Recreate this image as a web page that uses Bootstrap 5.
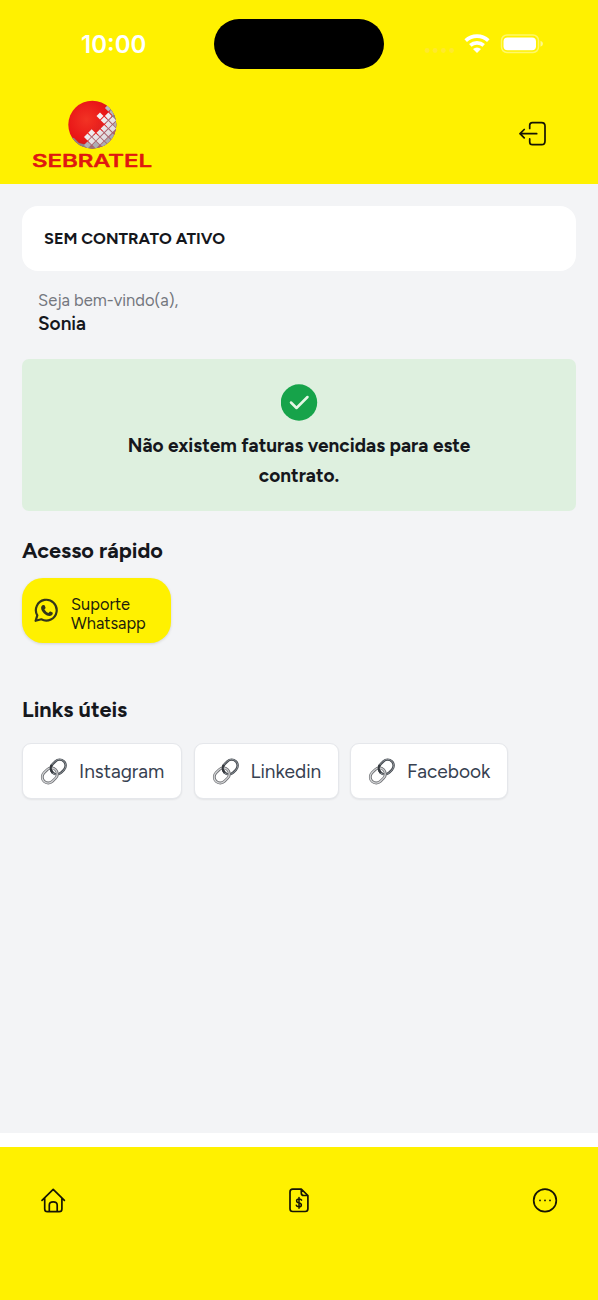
<!DOCTYPE html>
<html lang="pt-BR">
<head>
<meta charset="utf-8">
<meta name="viewport" content="width=device-width, initial-scale=1">
<title>Sebratel</title>
<link href="https://cdn.jsdelivr.net/npm/bootstrap@5.3.0/dist/css/bootstrap.min.css" rel="stylesheet">
<style>
:root { --brand: #fff100; }
body { font-family: Figtree, Lato, "Open Sans", sans-serif; background: #f3f4f6; color: #15171c; height: 1300px; overflow: hidden; }
svg { display: block; flex: none; }
.top-area { background: var(--brand); height: 184px; }
.status-bar { height: 88px; display: grid; grid-template-columns: 214px 170px 214px; }
.clock { font: 600 24px/30px Inter, sans-serif; letter-spacing: 0; padding: 30px 0 0 81px; color: #fff; }
.island { margin-top: 19px; height: 50px; border-radius: 25px; background: #000; width: 170px; }
.signals { padding: 34px 0 0 39px; }
.brand-row { padding: 12px 51px 0 32px; }
.logout { margin-top: 21px; }
.content { padding: 22px 22px 0; height: 949px; }
.contract { height: 65px; border-radius: 16px; padding: 1px 22px 0; font-size: 16.3px; font-weight: 700; }
.welcome { padding: 17px 16px 0; height: 88px; }
.hello { font-size: 16.5px; line-height: 24px; color: #74777e; }
.person { font-size: 19px; line-height: 24px; font-weight: 600; }
.notice { background: #def0df; height: 152px; border-radius: 7px; padding: 25px 90px 0; }
.notice p { font-size: 19px; line-height: 30px; font-weight: 700; margin: 10px 0 0; }
.section-title { font-size: 21.7px; line-height: 30px; font-weight: 700; margin: 0; height: 30px; }
.quick-title { margin-top: 24px; }
.links-title { margin-top: 51px; }
.support { background: var(--brand); width: 149px; height: 65px; border-radius: 21px; padding: 0 12px; margin-top: 13px; font-size: 16.4px; line-height: 19px; color: #1d1d0c; box-shadow: 0 1px 3px #0002; }
.support-label { padding-top: 7px; }
.link-row { margin-top: 19px; gap: 11.500px; }
.link-chip { height: 56px; border: 1px solid #e5e7eb; border-radius: 9px; background: #fff; padding-left: 17px; gap: 11px; font-size: 19.1px; color: #374151; box-shadow: 0 1px 2px #0001; text-decoration: none; }
.link-chip span { padding-top: 2px; }
.w-ig { width: 160px; } .w-li { width: 145px; } .w-fb { width: 158px; }
.bottom-bar { height: 167px; background: var(--brand); border-top: 14px solid #fff; padding: 40px 40px 0; }
</style>
</head>
<body>
<svg width="0" height="0" class="position-absolute">
  <defs>
    <symbol id="chain" viewBox="-.5 -.8 29 29">
      <g fill="none" transform="rotate(-45 14 14)">
        <rect x="12" y="7.800" width="16.500" height="12.400" rx="6.200" stroke="#43484e" stroke-width="2.500"/>
        <rect x="11.800" y="7.500" width="16.900" height="12.800" rx="6.400" stroke="#a9afb5" stroke-width=".7"/>
        <rect x="-.6" y="7.800" width="17" height="12.400" rx="6.200" stroke="#6d6f73" stroke-width="2.900"/>
        <rect x="-.7" y="7.700" width="17" height="12.400" rx="6.200" stroke="#d3d4d6" stroke-width="1.300"/>
        <path d="M12 14c0-3 2-5.900 5-6.200" stroke="#34383d" stroke-width="2.500"/>
      </g>
    </symbol>
  </defs>
</svg>

<header class="top-area">
  <div class="status-bar">
    <div class="clock">10:00</div>
    <div class="island"></div>
    <div class="signals">
      <svg width="120" height="22" viewBox="0 0 120 22">
        <g fill="#ffe838" opacity=".8"><circle cx="4" cy="16.500" r="2.400"/><circle cx="12" cy="16.500" r="2.400"/><circle cx="20.300" cy="16.500" r="2.400"/><circle cx="28.500" cy="16.500" r="2.400"/></g>
        <g fill="none" stroke="#fff" stroke-width="3.700"><path d="M42.700 6.600a16.500 16.500 0 0 1 22.600 0"/><path d="M47.300 11.400a10 10 0 0 1 13.400 0"/></g>
        <path d="M54 19l-4-4a5.900 5.900 0 0 1 8 0z" fill="#fff"/>
        <rect x="78.500" y="1" width="37" height="17.500" rx="5.500" fill="none" stroke="#fff86a" stroke-width="1.500"/>
        <rect x="80.500" y="3.500" width="32.500" height="12.700" rx="4" fill="#fff"/>
        <path d="M117.500 6.800q2.500 1 2.500 3t-2.500 3z" fill="#fff98a"/>
      </svg>
    </div>
  </div>
  <div class="brand-row d-flex justify-content-between align-items-start">
    <svg width="122" height="70" viewBox="0 0 122 70" role="img" aria-label="Sebratel">
      <defs>
        <radialGradient id="ball" cx=".38" cy=".4" r=".65"><stop offset="0" stop-color="#f23324"/><stop offset=".65" stop-color="#e91517"/><stop offset="1" stop-color="#c81015"/></radialGradient>
        <linearGradient id="shade" x1="0" y1="0" x2="1" y2="1"><stop offset=".5" stop-color="#6b6f78" stop-opacity="0"/><stop offset="1" stop-color="#6b6f78" stop-opacity=".7"/></linearGradient>
        <clipPath id="ballClip"><circle cx="60.300" cy="24.700" r="24"/></clipPath>
        <path id="tile" d="M0-3.500L3.500 0 0 3.500-3.500 0z"/>
      </defs>
      <circle cx="60.300" cy="24.700" r="24" fill="url(#ball)"/>
      <g clip-path="url(#ballClip)">
        <path d="M36 37l6 1 5 5 8 2 14-2 8-8 4-12-1-9-5-8 12-4v48H36z" fill="#898790"/>
        <path d="M55.500 37l4-4 4.500 4.500 8-8 4-4-4-4 6-6 8 9-4 14-13 9H58z" fill="#b5606a"/>
        <g fill="#f5f0f2">
          <use href="#tile" x="68" y="16"/><use href="#tile" x="76.400" y="16"/><use href="#tile" x="72.200" y="20.200"/><use href="#tile" x="80.600" y="20.200"/>
          <use href="#tile" x="76.400" y="24.400"/><use href="#tile" x="72.200" y="28.600"/><use href="#tile" x="80.600" y="28.600"/>
          <use href="#tile" x="59.700" y="32.700"/><use href="#tile" x="68" y="32.700"/><use href="#tile" x="76.400" y="32.700"/>
          <use href="#tile" x="55.500" y="36.900"/><use href="#tile" x="63.900" y="36.900"/><use href="#tile" x="72.200" y="36.900"/>
          <use href="#tile" x="59.700" y="41"/><use href="#tile" x="68" y="41"/>
        </g>
        <g fill="#b8b7bd"><use href="#tile" x="76.400" y="8"/><use href="#tile" x="80.600" y="12"/><use href="#tile" x="84.600" y="24.400"/><use href="#tile" x="80.600" y="37"/><use href="#tile" x="76.400" y="41"/><use href="#tile" x="63.900" y="45"/><use href="#tile" x="55.500" y="45"/><use href="#tile" x="72.200" y="45"/></g>
        <rect x="36" y="0" width="49" height="49" fill="url(#shade)" opacity=".4"/>
      </g>
      <text x="0" y="67.300" textLength="120" lengthAdjust="spacingAndGlyphs" font-family="Inter, sans-serif" font-weight="500" font-size="17.500" fill="#df1710" stroke="#df1710" stroke-width=".6" stroke-linejoin="round">SEBRATEL</text>
    </svg>
    <svg class="logout" width="28" height="26" viewBox="0 0 28 26" fill="none" stroke="#171505" stroke-width="1.700" stroke-linecap="round" stroke-linejoin="round"><path d="M10.700 7.500V4.300Q10.700 1.600 13.400 1.600H22.600Q26 1.600 26 5V20Q26 23.700 22.600 23.700H13.400Q10.700 23.700 10.700 21V17.900M17.700 12.700H1M5.200 8.500L1 12.700 5.200 16.900"/></svg>
  </div>
</header>

<main class="content">
  <div class="contract bg-white d-flex align-items-center"><span>SEM CONTRATO ATIVO</span></div>
  <div class="welcome"><div class="hello">Seja bem-vindo(a),</div><div class="person">Sonia</div></div>
  <section class="notice text-center">
    <svg class="mx-auto" width="37" height="37" viewBox="0 0 37 37"><circle cx="18" cy="18.500" r="18.200" fill="#16a34a"/><path d="M10 18.500l5.500 5.500L26.500 13" fill="none" stroke="#e4f7e5" stroke-width="2.500" stroke-linecap="round" stroke-linejoin="round"/></svg>
    <p>Não existem faturas vencidas para este<br>contrato.</p>
  </section>
  <h2 class="section-title quick-title">Acesso rápido</h2>
  <div class="support d-flex align-items-center gap-2">
    <svg width="25" height="25" viewBox="0 0 25 25"><path d="M1.600 22.800l1.700-5.400A10.400 10.400 0 1 1 7.300 21.300z" fill="none" stroke="#33371b" stroke-width="2.200" stroke-linejoin="round"/><path d="M8.400 7.200l1.500-.2q.6 0 .8.600l.8 2q.1.400-.2.800l-.9 1.100q1.500 2.500 4 3.500l1.200-1.300q.4-.4.900-.1l2 1q.4.200.3.700c-.2 1.700-1.500 2.700-3.200 2.700-4.300-.5-8.200-4.400-8.500-8.100 0-1 .5-2 1.300-2.700z" fill="#33371b"/></svg>
    <div class="ms-1 support-label">Suporte<br>Whatsapp</div>
  </div>
  <h2 class="section-title links-title">Links úteis</h2>
  <div class="link-row d-flex">
    <a class="link-chip w-ig d-flex align-items-center"><svg width="28" height="28"><use href="#chain"/></svg><span>Instagram</span></a>
    <a class="link-chip w-li d-flex align-items-center"><svg width="28" height="28"><use href="#chain"/></svg><span>Linkedin</span></a>
    <a class="link-chip w-fb d-flex align-items-center"><svg width="28" height="28"><use href="#chain"/></svg><span>Facebook</span></a>
  </div>
</main>

<nav class="bottom-bar d-flex justify-content-between align-items-start">
  <svg width="26" height="26" viewBox="0 0 26 26" fill="none" stroke="#171505" stroke-width="1.700" stroke-linecap="round" stroke-linejoin="round"><path d="M2 13.300L13.200 2.300 24.400 13.300M4.700 11.200V22Q4.700 24.700 7.400 24.700H19.200Q21.900 24.700 21.900 22V11.200M9.300 24.500V18Q9.300 14.800 13.200 14.800T17.200 18V24.500"/></svg>
  <svg width="22" height="26" viewBox="0 0 22 26" fill="none" stroke="#171505" stroke-width="1.700" stroke-linecap="round" stroke-linejoin="round"><path d="M13.300 2.200H4.700Q2 2.200 2 4.900V21.800Q2 24.500 4.700 24.500H17.200Q19.900 24.500 19.900 21.800V8.500zM13.300 2.200V6Q13.300 8.500 15.800 8.500H19.900"/><path stroke-width="1.500" d="M13.600 13.200Q13 12 11 12C7.800 12 7.800 15.500 11 15.900S14.200 19.800 11 19.800Q8.700 19.800 8.300 18.300M11 10.500V21.300"/></svg>
  <svg width="26" height="26" viewBox="0 0 26 26"><circle cx="13" cy="13.400" r="11.300" fill="none" stroke="#171505" stroke-width="1.700"/><g fill="#171505"><circle cx="8" cy="13.400" r=".9"/><circle cx="13" cy="13.400" r=".9"/><circle cx="18" cy="13.400" r=".9"/></g></svg>
</nav>
<script src="https://cdn.jsdelivr.net/npm/bootstrap@5.3.0/dist/js/bootstrap.bundle.min.js"></script>
</body>
</html>
